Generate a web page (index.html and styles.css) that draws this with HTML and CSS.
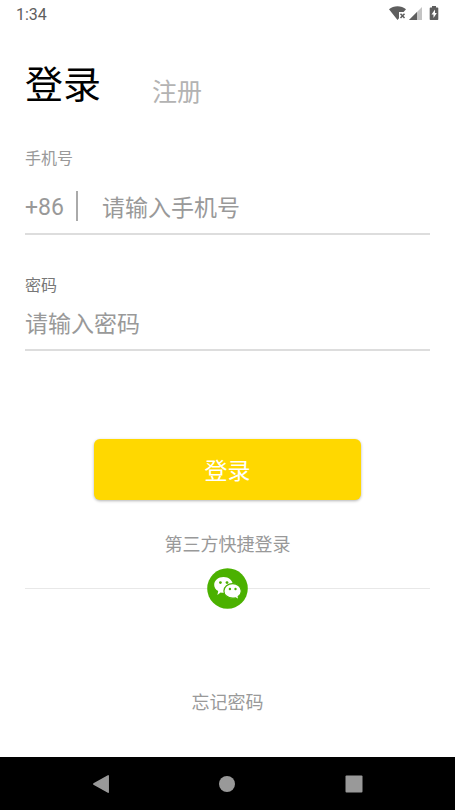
FILE: index.html
```html
<!DOCTYPE html>
<html lang="zh-CN">
<head>
<meta charset="utf-8">
<meta name="viewport" content="width=device-width, initial-scale=1">
<title>登录</title>
<link rel="stylesheet" href="styles.css">
</head>
<body>
<header class="status">
  <span>1:34</span>
  <svg class="status-icons" width="52" height="16" viewBox="0 0 52 16" aria-hidden="true">
    <path fill="#5e5e5e" d="M0 3.2C4.5-.7 12.500-.7 17 3.200L14.600 6H10v6.200L8.500 14z"/>
    <path stroke="#5e5e5e" stroke-width="1.500" d="M11.500 7.800l4 4.200m0-4.200l-4 4.200"/>
    <path fill="#c4c4c4" d="M33 1v13H20z"/>
    <path fill="#5e5e5e" d="M28 6v8h-8z"/>
    <path fill="#5e5e5e" d="M43 1.500V0h4v1.500h1.500q.8 0 .8.800V13.200q0 .8-.8.800h-7q-.8 0-.8-.8V2.300q0-.8.800-.8z"/>
    <path fill="#fff" d="M46 3.500L42.500 8.500h2V12l3.300-5h-1.800z"/>
  </svg>
</header>
<main class="page">
  <nav class="tabs">
    <h1 class="tab-current">登录</h1>
    <a class="tab" href="#register">注册</a>
  </nav>
  <form class="form">
    <div class="field">
      <label class="label" for="phone">手机号</label>
      <div class="phone-row">
        <span class="prefix">+86</span>
        <input class="input" id="phone" type="tel" placeholder="请输入手机号">
      </div>
    </div>
    <div class="field field-password">
      <label class="label label-dark" for="password">密码</label>
      <input class="input" id="password" type="password" placeholder="请输入密码">
    </div>
    <button class="submit" type="submit">登录</button>
  </form>
  <section class="social">
    <p class="social-title">第三方快捷登录</p>
    <div class="social-row">
      <button class="wechat" type="button" aria-label="微信登录">
        <svg width="41" height="41" viewBox="0 0 41 41" aria-hidden="true">
          <circle cx="20.500" cy="20.500" r="20.300" fill="#4bb100"/>
          <path fill="#fff" d="M16.500 9c5.200 0 9.300 3.500 9.300 7.900s-4.100 7.900-9.300 7.900c-1 0-2-.1-2.900-.4L10.400 27l.8-3.900c-2.500-1.400-4-3.600-4-6.200C7.200 12.500 11.300 9 16.500 9z"/>
          <path fill="#fff" stroke="#4bb100" stroke-width="1.200" d="M25.600 15.600c4.800 0 8.700 3.300 8.700 7.300 0 2.300-1.200 4.300-3.100 5.600l.7 3.300-3.400-1.900c-.9.200-1.900.3-2.900.3-4.800 0-8.700-3.300-8.700-7.300s3.900-7.300 8.700-7.300z"/>
          <g fill="#4bb100">
            <circle cx="13.400" cy="14.600" r="1.400"/><circle cx="20" cy="14.600" r="1.400"/>
            <circle cx="22.900" cy="21" r="1.200"/><circle cx="28.500" cy="21" r="1.200"/>
          </g>
        </svg>
      </button>
    </div>
  </section>
  <a class="forgot" href="#forgot">忘记密码</a>
</main>
<footer class="navbar">
  <button class="nav-button" type="button" aria-label="返回">
    <svg width="20" height="20" viewBox="0 0 20 20"><path fill="#999" stroke="#999" stroke-width="1.500" stroke-linejoin="round" d="M2.800 10L17.200 1.800v16.400z"/></svg>
  </button>
  <button class="nav-button" type="button" aria-label="主页">
    <svg width="20" height="20" viewBox="0 0 20 20"><circle cx="10" cy="10" r="8" fill="#999"/></svg>
  </button>
  <button class="nav-button" type="button" aria-label="最近任务">
    <svg width="20" height="20" viewBox="0 0 20 20"><rect x="1.500" y="1.500" width="17" height="17" rx="1" fill="#999"/></svg>
  </button>
</footer>
</body>
</html>
```
FILE: styles.css
```css
* {
  box-sizing: border-box;
}

body {
  margin: 0;
  min-height: 100vh;
  display: flex;
  flex-direction: column;
  background: #fff;
  color: #999;
  font-family: Roboto, "Noto Sans CJK SC", sans-serif;
}

button,
input {
  margin: 0;
  padding: 0;
  border: 0;
  background: none;
  color: inherit;
  font: inherit;
}

.status {
  display: flex;
  justify-content: space-between;
  align-items: center;
  height: 28px;
  padding: 0 14px 0 16px;
  color: #5e5e5e;
  font-size: 16px;
}

.status-icons {
  display: block;
}

.page {
  flex: 1;
  display: flex;
  flex-direction: column;
  padding: 29px 25px 0;
}

.tabs {
  display: flex;
  align-items: flex-end;
  gap: 51px;
}

.tab-current {
  margin: 0;
  color: #000;
  font-size: 38px;
  font-weight: 400;
  line-height: 56px;
}

.tab {
  color: #b3b3b3;
  font-size: 25px;
  line-height: 40px;
  text-decoration: none;
}

.form {
  display: flex;
  flex-direction: column;
  padding-top: 34px;
}

.field {
  display: flex;
  flex-direction: column;
  border-bottom: 2px solid #ddd;
}

.field-password {
  margin-top: 39px;
}

.label {
  font-size: 16px;
  line-height: 24px;
}

.label-dark {
  color: #777;
}

.phone-row {
  display: flex;
  align-items: center;
  padding: 11px 0 3px;
}

.prefix {
  padding: 4px 12px 0 0;
  border-right: 2px solid #aaa;
  font-size: 23px;
  line-height: 26px;
}

.phone-row .input {
  flex: 1;
  min-width: 0;
  margin-left: 24px;
}

.input {
  height: 48px;
  padding-top: 4px;
  font-size: 23px;
  outline: 0;
}

.field-password .input {
  height: 51px;
  padding-top: 1px;
}

.input::placeholder {
  color: #999;
  opacity: 1;
}

.submit {
  align-self: center;
  width: 66%;
  height: 61px;
  margin-top: 88px;
  padding-bottom: 2px;
  border-radius: 6px;
  background: #ffd800;
  box-shadow: 0 1px 3px rgba(0, 0, 0, 0.3);
  color: #fff;
  font-size: 23px;
}

.social {
  padding-top: 33px;
  text-align: center;
}

.social-title {
  margin: 0;
  font-size: 18px;
  line-height: 24px;
}

.social-row {
  display: flex;
  align-items: center;
  padding-top: 11px;
}

.social-row::before,
.social-row::after {
  content: "";
  flex: 1;
  height: 1px;
  background: #e8e8e8;
}

.wechat svg,
.nav-button svg {
  display: block;
}

.forgot {
  align-self: center;
  margin-top: 82px;
  font-size: 18px;
  line-height: 24px;
  color: inherit;
  text-decoration: none;
}

.navbar {
  display: flex;
  justify-content: space-around;
  align-items: center;
  height: 53px;
  padding: 0 38px;
  background: #000;
}
```
